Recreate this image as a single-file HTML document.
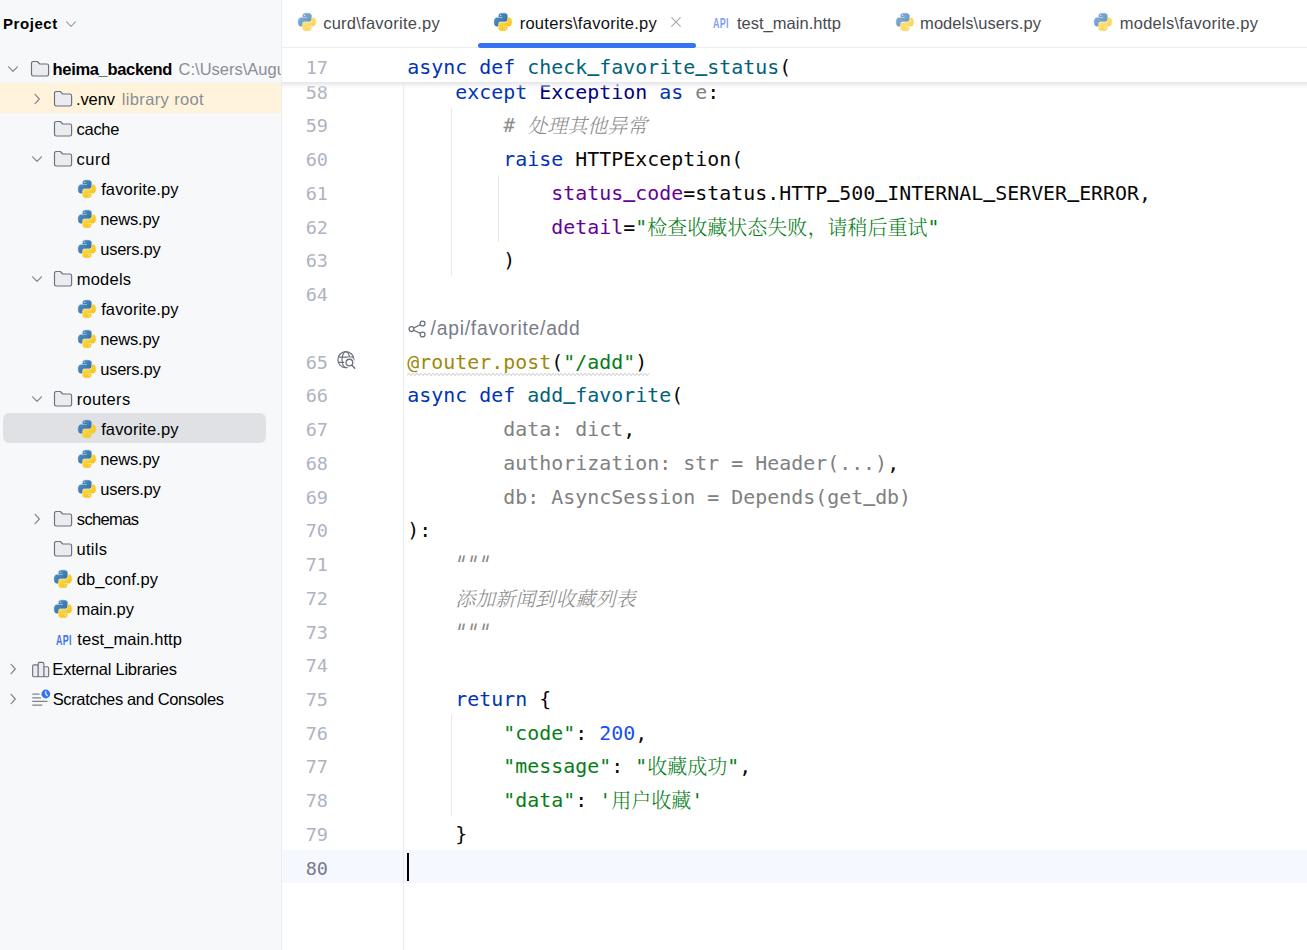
<!DOCTYPE html>
<html lang="zh-CN"><head><meta charset="utf-8"><title>heima_backend – routers\favorite.py</title>
<style>
html,body{margin:0;padding:0;background:#fff;}
body{width:1307px;height:950px;overflow:hidden;position:relative;font-family:"Liberation Sans","Noto Sans CJK SC",sans-serif;color:#000;}
#side{position:absolute;left:0;top:0;width:281px;height:950px;background:#f7f8fa;border-right:1px solid #ebecf0;overflow:hidden;}
#side .t{position:absolute;white-space:pre;font-size:16.5px;line-height:30px;height:30px;color:#000;}
#side .g{color:#8a8d96;font-weight:normal}
#side .b{font-weight:bold;}
.api{position:absolute;font-family:"Liberation Sans",sans-serif;font-weight:bold;font-size:15.300px;line-height:18px;height:18px;transform:scaleX(.585);transform-origin:0 50%;letter-spacing:.4px;}
#ed{position:absolute;left:282px;top:0;width:1025px;height:950px;background:#fff;overflow:hidden;}
.tab{position:absolute;top:0;height:47px;line-height:47px;font-size:16.5px;color:#404348;white-space:pre;}
.code{position:absolute;white-space:pre;font-family:"DejaVu Sans Mono","Liberation Mono","Noto Serif CJK SC",monospace;font-size:19.900px;letter-spacing:0.020px;color:#080808;}
.ln{position:absolute;white-space:pre;font-family:"DejaVu Sans Mono","Liberation Mono",monospace;font-size:18.500px;color:#aeb3c2;text-align:right;width:60px;}
.k{color:#0033b3}.f{color:#00627a}.s{color:#067d17}.n{color:#1750eb}.p{color:#660099}.c{color:#8c8c8c;font-style:italic}.u{color:#808080}.d{color:#9e880d}.x{color:#000080}
.cj{font-family:"Liberation Serif","Noto Serif CJK SC",serif;line-height:0;font-size:20px;font-weight:300;position:relative;top:0.700px;}
.inl{position:absolute;white-space:pre;font-size:19.300px;color:#787c88;height:33.740px;line-height:33.740px}
.tq{display:inline-block;transform:skewX(-13deg) scaleY(1.200);transform-origin:0 38%}
.us{position:relative;top:-3.400px;font-weight:bold}
.guide{position:absolute;width:1px;background:#e7e8ed;}
</style></head><body>
<svg width="0" height="0" style="position:absolute" aria-hidden="true">
<linearGradient id="pb" x1="0" y1="0" x2="1" y2="1"><stop offset="0" stop-color="#5497cf"/><stop offset="1" stop-color="#2c679c"/></linearGradient>
<linearGradient id="pyl" x1="0" y1="0" x2="1" y2="1"><stop offset="0" stop-color="#ffe355"/><stop offset="1" stop-color="#f2b90f"/></linearGradient>
</svg>

<div id="side">
<span id="proj" class="t b" style="left:2.91px;top:8.90px;letter-spacing:0.575px;font-size:15px">Project</span>
<svg style="position:absolute;left:63.00px;top:18.20px" viewBox="0 0 16 12" width="16" height="12"><path d="M3.600 3.800 L8 8.300 L12.400 3.800" fill="none" stroke="#9da0a8" stroke-width="1.200" stroke-linecap="round" stroke-linejoin="round"/></svg>
<div style="position:absolute;left:0;top:83.400px;width:281px;height:30px;background:#fff4db"></div>
<div style="position:absolute;left:3.200px;top:413.400px;width:262.600px;height:30px;background:#dfe1e5;border-radius:6px"></div>
<svg style="position:absolute;left:5.00px;top:63.00px" viewBox="0 0 16 12" width="16" height="12"><path d="M3.600 3.800 L8 8.300 L12.400 3.800" fill="none" stroke="#818594" stroke-width="1.200" stroke-linecap="round" stroke-linejoin="round"/></svg>
<svg style="position:absolute;left:30.2px;top:60.4px" viewBox="0 0 20 18" width="20" height="18"><path d="M1.500 3.200 a1.700 1.700 0 0 1 1.700-1.700 h4.100 l2.500 2.500 h7.100 a1.700 1.700 0 0 1 1.700 1.700 v8.600 a1.700 1.700 0 0 1-1.700 1.700 h-13.700 a1.700 1.700 0 0 1-1.700-1.700 z" fill="#ebecf0" stroke="#6c707e" stroke-width="1.150" stroke-linejoin="round"/></svg>
<span id="s0" class="t b" style="left:52.58px;top:54.10px;letter-spacing:-0.331px;">heima_backend</span>
<span id="e0" class="t g" style="left:178.60px;top:54.10px;letter-spacing:0.000px;">C:\Users\August</span>
<svg style="position:absolute;left:30.80px;top:91.00px" viewBox="0 0 12 16" width="12" height="16"><path d="M4.100 3.300 L8.300 8 L4.100 12.700" fill="none" stroke="#818594" stroke-width="1.200" stroke-linecap="round" stroke-linejoin="round"/></svg>
<svg style="position:absolute;left:53.2px;top:90.4px" viewBox="0 0 20 18" width="20" height="18"><path d="M1.500 3.200 a1.700 1.700 0 0 1 1.700-1.700 h4.100 l2.500 2.500 h7.100 a1.700 1.700 0 0 1 1.700 1.700 v8.600 a1.700 1.700 0 0 1-1.700 1.700 h-13.700 a1.700 1.700 0 0 1-1.700-1.700 z" fill="#ebecf0" stroke="#6c707e" stroke-width="1.150" stroke-linejoin="round"/></svg>
<span id="s1" class="t" style="left:75.88px;top:84.10px;letter-spacing:-0.074px;">.venv</span>
<span id="e1" class="t g" style="left:121.71px;top:84.10px;letter-spacing:0.366px;">library root</span>
<svg style="position:absolute;left:53.2px;top:120.4px" viewBox="0 0 20 18" width="20" height="18"><path d="M1.500 3.200 a1.700 1.700 0 0 1 1.700-1.700 h4.100 l2.500 2.500 h7.100 a1.700 1.700 0 0 1 1.700 1.700 v8.600 a1.700 1.700 0 0 1-1.700 1.700 h-13.700 a1.700 1.700 0 0 1-1.700-1.700 z" fill="#ebecf0" stroke="#6c707e" stroke-width="1.150" stroke-linejoin="round"/></svg>
<span id="s2" class="t" style="left:76.60px;top:114.10px;letter-spacing:-0.321px;">cache</span>
<svg style="position:absolute;left:29.00px;top:153.00px" viewBox="0 0 16 12" width="16" height="12"><path d="M3.600 3.800 L8 8.300 L12.400 3.800" fill="none" stroke="#818594" stroke-width="1.200" stroke-linecap="round" stroke-linejoin="round"/></svg>
<svg style="position:absolute;left:53.2px;top:150.4px" viewBox="0 0 20 18" width="20" height="18"><path d="M1.500 3.200 a1.700 1.700 0 0 1 1.700-1.700 h4.100 l2.500 2.500 h7.100 a1.700 1.700 0 0 1 1.700 1.700 v8.600 a1.700 1.700 0 0 1-1.700 1.700 h-13.700 a1.700 1.700 0 0 1-1.700-1.700 z" fill="#ebecf0" stroke="#6c707e" stroke-width="1.150" stroke-linejoin="round"/></svg>
<span id="s3" class="t" style="left:76.60px;top:144.10px;letter-spacing:0.461px;">curd</span>
<svg style="position:absolute;left:78px;top:180.1px;opacity:1" viewBox="0 0 18 18" width="18" height="18" overflow="visible"><g transform="translate(9 9) scale(1.05) translate(-9 -9)"><path d="M8.9 0.6c-4.2 0-3.9 1.8-3.9 1.8v1.9h4v.6H3.4S.6 4.6.6 8.9c0 4.300 2.400 4.100 2.400 4.100h1.500v-2s-.1-2.400 2.400-2.400h4s2.300 0 2.300-2.200V2.800S13.600.6 8.900.6zM6.700 1.900a.73.73 0 1 1 0 1.460.73.73 0 0 1 0-1.460z" fill="url(#pb)" stroke="#3f7fb5" stroke-width="0.350"/><path d="M9.100 17.400c4.200 0 3.900-1.800 3.900-1.800v-1.900H9v-.6h5.600s2.800.3 2.800-4c0-4.300-2.400-4.100-2.400-4.100h-1.500v2s.1 2.400-2.400 2.400h-4s-2.300 0-2.300 2.200v3.600s-.4 2.200 4.300 2.200zm2.200-1.300a.73.73 0 1 1 0-1.460.73.73 0 0 1 0 1.460z" fill="url(#pyl)" stroke="#f9cc32" stroke-width="0.350"/></g></svg>
<span id="s4" class="t" style="left:101.16px;top:174.10px;letter-spacing:0.134px;">favorite.py</span>
<svg style="position:absolute;left:78px;top:210.1px;opacity:1" viewBox="0 0 18 18" width="18" height="18" overflow="visible"><g transform="translate(9 9) scale(1.05) translate(-9 -9)"><path d="M8.9 0.6c-4.2 0-3.9 1.8-3.9 1.8v1.9h4v.6H3.4S.6 4.6.6 8.9c0 4.300 2.400 4.100 2.400 4.100h1.500v-2s-.1-2.400 2.400-2.400h4s2.300 0 2.300-2.200V2.800S13.600.6 8.900.6zM6.700 1.900a.73.73 0 1 1 0 1.460.73.73 0 0 1 0-1.460z" fill="url(#pb)" stroke="#3f7fb5" stroke-width="0.350"/><path d="M9.100 17.400c4.200 0 3.900-1.800 3.900-1.800v-1.900H9v-.6h5.600s2.800.3 2.800-4c0-4.300-2.400-4.100-2.400-4.100h-1.500v2s.1 2.400-2.400 2.400h-4s-2.300 0-2.300 2.200v3.600s-.4 2.200 4.300 2.200zm2.200-1.300a.73.73 0 1 1 0-1.460.73.73 0 0 1 0 1.460z" fill="url(#pyl)" stroke="#f9cc32" stroke-width="0.350"/></g></svg>
<span id="s5" class="t" style="left:100.19px;top:204.10px;letter-spacing:-0.176px;">news.py</span>
<svg style="position:absolute;left:78px;top:240.1px;opacity:1" viewBox="0 0 18 18" width="18" height="18" overflow="visible"><g transform="translate(9 9) scale(1.05) translate(-9 -9)"><path d="M8.9 0.6c-4.2 0-3.9 1.8-3.9 1.8v1.9h4v.6H3.4S.6 4.6.6 8.9c0 4.300 2.400 4.100 2.400 4.100h1.500v-2s-.1-2.400 2.400-2.400h4s2.300 0 2.300-2.200V2.800S13.600.6 8.900.6zM6.700 1.900a.73.73 0 1 1 0 1.460.73.73 0 0 1 0-1.460z" fill="url(#pb)" stroke="#3f7fb5" stroke-width="0.350"/><path d="M9.100 17.400c4.200 0 3.900-1.800 3.900-1.800v-1.900H9v-.6h5.600s2.800.3 2.800-4c0-4.300-2.400-4.100-2.400-4.100h-1.500v2s.1 2.400-2.400 2.400h-4s-2.300 0-2.300 2.200v3.600s-.4 2.200 4.300 2.200zm2.200-1.300a.73.73 0 1 1 0-1.460.73.73 0 0 1 0 1.460z" fill="url(#pyl)" stroke="#f9cc32" stroke-width="0.350"/></g></svg>
<span id="s6" class="t" style="left:100.30px;top:234.10px;letter-spacing:-0.278px;">users.py</span>
<svg style="position:absolute;left:29.00px;top:273.00px" viewBox="0 0 16 12" width="16" height="12"><path d="M3.600 3.800 L8 8.300 L12.400 3.800" fill="none" stroke="#818594" stroke-width="1.200" stroke-linecap="round" stroke-linejoin="round"/></svg>
<svg style="position:absolute;left:53.2px;top:270.4px" viewBox="0 0 20 18" width="20" height="18"><path d="M1.500 3.200 a1.700 1.700 0 0 1 1.700-1.700 h4.100 l2.500 2.500 h7.100 a1.700 1.700 0 0 1 1.700 1.700 v8.600 a1.700 1.700 0 0 1-1.700 1.700 h-13.700 a1.700 1.700 0 0 1-1.700-1.700 z" fill="#ebecf0" stroke="#6c707e" stroke-width="1.150" stroke-linejoin="round"/></svg>
<span id="s7" class="t" style="left:76.68px;top:264.10px;letter-spacing:0.243px;">models</span>
<svg style="position:absolute;left:78px;top:300.09999999999997px;opacity:1" viewBox="0 0 18 18" width="18" height="18" overflow="visible"><g transform="translate(9 9) scale(1.05) translate(-9 -9)"><path d="M8.9 0.6c-4.2 0-3.9 1.8-3.9 1.8v1.9h4v.6H3.4S.6 4.6.6 8.9c0 4.300 2.400 4.100 2.400 4.100h1.500v-2s-.1-2.400 2.400-2.400h4s2.300 0 2.300-2.200V2.800S13.600.6 8.900.6zM6.700 1.900a.73.73 0 1 1 0 1.460.73.73 0 0 1 0-1.460z" fill="url(#pb)" stroke="#3f7fb5" stroke-width="0.350"/><path d="M9.100 17.400c4.200 0 3.900-1.800 3.900-1.800v-1.900H9v-.6h5.600s2.800.3 2.800-4c0-4.300-2.400-4.100-2.400-4.100h-1.500v2s.1 2.400-2.400 2.400h-4s-2.300 0-2.300 2.200v3.600s-.4 2.200 4.300 2.200zm2.200-1.300a.73.73 0 1 1 0-1.460.73.73 0 0 1 0 1.460z" fill="url(#pyl)" stroke="#f9cc32" stroke-width="0.350"/></g></svg>
<span id="s8" class="t" style="left:101.16px;top:294.10px;letter-spacing:0.134px;">favorite.py</span>
<svg style="position:absolute;left:78px;top:330.09999999999997px;opacity:1" viewBox="0 0 18 18" width="18" height="18" overflow="visible"><g transform="translate(9 9) scale(1.05) translate(-9 -9)"><path d="M8.9 0.6c-4.2 0-3.9 1.8-3.9 1.8v1.9h4v.6H3.4S.6 4.6.6 8.9c0 4.300 2.400 4.100 2.400 4.100h1.500v-2s-.1-2.400 2.400-2.400h4s2.300 0 2.300-2.200V2.800S13.600.6 8.900.6zM6.700 1.900a.73.73 0 1 1 0 1.460.73.73 0 0 1 0-1.460z" fill="url(#pb)" stroke="#3f7fb5" stroke-width="0.350"/><path d="M9.100 17.400c4.200 0 3.900-1.800 3.900-1.800v-1.900H9v-.6h5.600s2.800.3 2.800-4c0-4.300-2.400-4.100-2.400-4.100h-1.500v2s.1 2.400-2.400 2.400h-4s-2.300 0-2.300 2.200v3.600s-.4 2.200 4.300 2.200zm2.200-1.300a.73.73 0 1 1 0-1.460.73.73 0 0 1 0 1.460z" fill="url(#pyl)" stroke="#f9cc32" stroke-width="0.350"/></g></svg>
<span id="s9" class="t" style="left:100.19px;top:324.10px;letter-spacing:-0.176px;">news.py</span>
<svg style="position:absolute;left:78px;top:360.09999999999997px;opacity:1" viewBox="0 0 18 18" width="18" height="18" overflow="visible"><g transform="translate(9 9) scale(1.05) translate(-9 -9)"><path d="M8.9 0.6c-4.2 0-3.9 1.8-3.9 1.8v1.9h4v.6H3.4S.6 4.6.6 8.9c0 4.300 2.400 4.100 2.400 4.100h1.500v-2s-.1-2.400 2.400-2.400h4s2.300 0 2.300-2.200V2.800S13.600.6 8.900.6zM6.700 1.900a.73.73 0 1 1 0 1.460.73.73 0 0 1 0-1.460z" fill="url(#pb)" stroke="#3f7fb5" stroke-width="0.350"/><path d="M9.100 17.400c4.200 0 3.900-1.800 3.900-1.800v-1.900H9v-.6h5.600s2.800.3 2.800-4c0-4.300-2.400-4.100-2.400-4.100h-1.500v2s.1 2.400-2.400 2.400h-4s-2.300 0-2.300 2.200v3.600s-.4 2.200 4.300 2.200zm2.200-1.300a.73.73 0 1 1 0-1.460.73.73 0 0 1 0 1.460z" fill="url(#pyl)" stroke="#f9cc32" stroke-width="0.350"/></g></svg>
<span id="s10" class="t" style="left:100.30px;top:354.10px;letter-spacing:-0.278px;">users.py</span>
<svg style="position:absolute;left:29.00px;top:393.00px" viewBox="0 0 16 12" width="16" height="12"><path d="M3.600 3.800 L8 8.300 L12.400 3.800" fill="none" stroke="#818594" stroke-width="1.200" stroke-linecap="round" stroke-linejoin="round"/></svg>
<svg style="position:absolute;left:53.2px;top:390.4px" viewBox="0 0 20 18" width="20" height="18"><path d="M1.500 3.200 a1.700 1.700 0 0 1 1.700-1.700 h4.100 l2.500 2.500 h7.100 a1.700 1.700 0 0 1 1.700 1.700 v8.600 a1.700 1.700 0 0 1-1.700 1.700 h-13.700 a1.700 1.700 0 0 1-1.700-1.700 z" fill="#ebecf0" stroke="#6c707e" stroke-width="1.150" stroke-linejoin="round"/></svg>
<span id="s11" class="t" style="left:76.68px;top:384.10px;letter-spacing:0.353px;">routers</span>
<svg style="position:absolute;left:78px;top:420.09999999999997px;opacity:1" viewBox="0 0 18 18" width="18" height="18" overflow="visible"><g transform="translate(9 9) scale(1.05) translate(-9 -9)"><path d="M8.9 0.6c-4.2 0-3.9 1.8-3.9 1.8v1.9h4v.6H3.4S.6 4.6.6 8.9c0 4.300 2.400 4.100 2.400 4.100h1.500v-2s-.1-2.400 2.400-2.400h4s2.300 0 2.300-2.200V2.800S13.600.6 8.900.6zM6.700 1.900a.73.73 0 1 1 0 1.460.73.73 0 0 1 0-1.460z" fill="url(#pb)" stroke="#3f7fb5" stroke-width="0.350"/><path d="M9.100 17.400c4.200 0 3.900-1.800 3.900-1.800v-1.900H9v-.6h5.600s2.800.3 2.800-4c0-4.300-2.400-4.100-2.400-4.100h-1.500v2s.1 2.400-2.400 2.400h-4s-2.300 0-2.300 2.200v3.600s-.4 2.200 4.300 2.200zm2.200-1.300a.73.73 0 1 1 0-1.460.73.73 0 0 1 0 1.460z" fill="url(#pyl)" stroke="#f9cc32" stroke-width="0.350"/></g></svg>
<span id="s12" class="t" style="left:101.16px;top:414.10px;letter-spacing:0.134px;">favorite.py</span>
<svg style="position:absolute;left:78px;top:450.09999999999997px;opacity:1" viewBox="0 0 18 18" width="18" height="18" overflow="visible"><g transform="translate(9 9) scale(1.05) translate(-9 -9)"><path d="M8.9 0.6c-4.2 0-3.9 1.8-3.9 1.8v1.9h4v.6H3.4S.6 4.6.6 8.9c0 4.300 2.400 4.100 2.400 4.100h1.500v-2s-.1-2.400 2.400-2.400h4s2.300 0 2.300-2.200V2.800S13.600.6 8.900.6zM6.700 1.900a.73.73 0 1 1 0 1.460.73.73 0 0 1 0-1.460z" fill="url(#pb)" stroke="#3f7fb5" stroke-width="0.350"/><path d="M9.100 17.400c4.200 0 3.900-1.800 3.900-1.800v-1.900H9v-.6h5.600s2.800.3 2.800-4c0-4.300-2.400-4.100-2.400-4.100h-1.500v2s.1 2.400-2.400 2.400h-4s-2.300 0-2.300 2.200v3.600s-.4 2.200 4.300 2.200zm2.200-1.300a.73.73 0 1 1 0-1.460.73.73 0 0 1 0 1.460z" fill="url(#pyl)" stroke="#f9cc32" stroke-width="0.350"/></g></svg>
<span id="s13" class="t" style="left:100.19px;top:444.10px;letter-spacing:-0.176px;">news.py</span>
<svg style="position:absolute;left:78px;top:480.09999999999997px;opacity:1" viewBox="0 0 18 18" width="18" height="18" overflow="visible"><g transform="translate(9 9) scale(1.05) translate(-9 -9)"><path d="M8.9 0.6c-4.2 0-3.9 1.8-3.9 1.8v1.9h4v.6H3.4S.6 4.6.6 8.9c0 4.300 2.400 4.100 2.400 4.100h1.500v-2s-.1-2.400 2.400-2.400h4s2.300 0 2.300-2.200V2.800S13.600.6 8.900.6zM6.700 1.900a.73.73 0 1 1 0 1.460.73.73 0 0 1 0-1.460z" fill="url(#pb)" stroke="#3f7fb5" stroke-width="0.350"/><path d="M9.100 17.400c4.200 0 3.900-1.800 3.900-1.800v-1.900H9v-.6h5.600s2.800.3 2.800-4c0-4.300-2.400-4.100-2.400-4.100h-1.500v2s.1 2.400-2.400 2.400h-4s-2.300 0-2.300 2.200v3.600s-.4 2.200 4.300 2.200zm2.200-1.300a.73.73 0 1 1 0-1.460.73.73 0 0 1 0 1.460z" fill="url(#pyl)" stroke="#f9cc32" stroke-width="0.350"/></g></svg>
<span id="s14" class="t" style="left:100.30px;top:474.10px;letter-spacing:-0.278px;">users.py</span>
<svg style="position:absolute;left:30.80px;top:511.00px" viewBox="0 0 12 16" width="12" height="16"><path d="M4.100 3.300 L8.300 8 L4.100 12.700" fill="none" stroke="#818594" stroke-width="1.200" stroke-linecap="round" stroke-linejoin="round"/></svg>
<svg style="position:absolute;left:53.2px;top:510.4px" viewBox="0 0 20 18" width="20" height="18"><path d="M1.500 3.200 a1.700 1.700 0 0 1 1.700-1.700 h4.100 l2.500 2.500 h7.100 a1.700 1.700 0 0 1 1.700 1.700 v8.600 a1.700 1.700 0 0 1-1.700 1.700 h-13.700 a1.700 1.700 0 0 1-1.700-1.700 z" fill="#ebecf0" stroke="#6c707e" stroke-width="1.150" stroke-linejoin="round"/></svg>
<span id="s15" class="t" style="left:76.79px;top:504.10px;letter-spacing:-0.645px;">schemas</span>
<svg style="position:absolute;left:53.2px;top:540.4px" viewBox="0 0 20 18" width="20" height="18"><path d="M1.500 3.200 a1.700 1.700 0 0 1 1.700-1.700 h4.100 l2.500 2.500 h7.100 a1.700 1.700 0 0 1 1.700 1.700 v8.600 a1.700 1.700 0 0 1-1.700 1.700 h-13.700 a1.700 1.700 0 0 1-1.700-1.700 z" fill="#ebecf0" stroke="#6c707e" stroke-width="1.150" stroke-linejoin="round"/></svg>
<span id="s16" class="t" style="left:76.53px;top:534.10px;letter-spacing:0.294px;">utils</span>
<svg style="position:absolute;left:54px;top:570.1px;opacity:1" viewBox="0 0 18 18" width="18" height="18" overflow="visible"><g transform="translate(9 9) scale(1.05) translate(-9 -9)"><path d="M8.9 0.6c-4.2 0-3.9 1.8-3.9 1.8v1.9h4v.6H3.4S.6 4.6.6 8.9c0 4.300 2.400 4.100 2.400 4.100h1.500v-2s-.1-2.400 2.400-2.400h4s2.300 0 2.300-2.200V2.800S13.600.6 8.900.6zM6.700 1.900a.73.73 0 1 1 0 1.460.73.73 0 0 1 0-1.460z" fill="url(#pb)" stroke="#3f7fb5" stroke-width="0.350"/><path d="M9.100 17.400c4.200 0 3.900-1.800 3.900-1.800v-1.900H9v-.6h5.600s2.800.3 2.800-4c0-4.300-2.400-4.100-2.400-4.100h-1.500v2s.1 2.400-2.400 2.400h-4s-2.300 0-2.300 2.200v3.600s-.4 2.200 4.300 2.200zm2.200-1.300a.73.73 0 1 1 0-1.460.73.73 0 0 1 0 1.460z" fill="url(#pyl)" stroke="#f9cc32" stroke-width="0.350"/></g></svg>
<span id="s17" class="t" style="left:76.82px;top:564.10px;letter-spacing:0.044px;">db_conf.py</span>
<svg style="position:absolute;left:54px;top:600.1px;opacity:1" viewBox="0 0 18 18" width="18" height="18" overflow="visible"><g transform="translate(9 9) scale(1.05) translate(-9 -9)"><path d="M8.9 0.6c-4.2 0-3.9 1.8-3.9 1.8v1.9h4v.6H3.4S.6 4.6.6 8.9c0 4.300 2.400 4.100 2.400 4.100h1.500v-2s-.1-2.400 2.400-2.400h4s2.300 0 2.300-2.200V2.800S13.600.6 8.900.6zM6.700 1.900a.73.73 0 1 1 0 1.460.73.73 0 0 1 0-1.460z" fill="url(#pb)" stroke="#3f7fb5" stroke-width="0.350"/><path d="M9.100 17.400c4.200 0 3.900-1.800 3.900-1.800v-1.900H9v-.6h5.600s2.800.3 2.800-4c0-4.300-2.400-4.100-2.400-4.100h-1.500v2s.1 2.400-2.400 2.400h-4s-2.300 0-2.300 2.200v3.600s-.4 2.200 4.300 2.200zm2.200-1.300a.73.73 0 1 1 0-1.460.73.73 0 0 1 0 1.460z" fill="url(#pyl)" stroke="#f9cc32" stroke-width="0.350"/></g></svg>
<span id="s18" class="t" style="left:76.45px;top:594.10px;letter-spacing:-0.049px;">main.py</span>
<span class="api" style="left:55.90px;top:631.20px;color:#4279f0">API</span>
<span id="s19" class="t" style="left:77.35px;top:624.10px;letter-spacing:0.073px;">test_main.http</span>
<svg style="position:absolute;left:6.80px;top:661.00px" viewBox="0 0 12 16" width="12" height="16"><path d="M4.100 3.300 L8.300 8 L4.100 12.700" fill="none" stroke="#818594" stroke-width="1.200" stroke-linecap="round" stroke-linejoin="round"/></svg>
<svg style="position:absolute;left:30.100px;top:653.80px" viewBox="0 0 22 30" width="22" height="30"><g fill="#ebecf0" stroke="#6c707e" stroke-width="1.100" stroke-linejoin="round"><rect x="2.650" y="10.900" width="5.700" height="11.800" rx="1.300"/><rect x="13.650" y="12.800" width="5.000" height="9.900" rx="1.300"/><rect x="8.150" y="8.350" width="5.700" height="14.350" rx="1.300"/></g></svg>
<span id="s20" class="t" style="left:52.36px;top:654.10px;letter-spacing:-0.225px;">External Libraries</span>
<svg style="position:absolute;left:6.80px;top:691.00px" viewBox="0 0 12 16" width="12" height="16"><path d="M4.100 3.300 L8.300 8 L4.100 12.700" fill="none" stroke="#818594" stroke-width="1.200" stroke-linecap="round" stroke-linejoin="round"/></svg>
<svg style="position:absolute;left:30px;top:683.90px" viewBox="0 0 22 30" width="22" height="30"><g stroke="#7e828e" stroke-width="1.250" stroke-linecap="butt"><path d="M2.300 10H9.500M2.300 13.800H11M2.300 17.400H17.500M2.300 21.100H12.300"/></g><circle cx="15.800" cy="10" r="4.400" fill="#3574f0"/><path d="M15.800 7.600V10.200L17.300 11.600" fill="none" stroke="#fff" stroke-width="1.100" stroke-linecap="round" stroke-linejoin="round"/></svg>
<span id="s21" class="t" style="left:52.69px;top:684.10px;letter-spacing:-0.360px;">Scratches and Consoles</span>
</div>
<div id="ed">
<svg style="position:absolute;left:16px;top:13px;opacity:0.72" viewBox="0 0 18 18" width="18" height="18" overflow="visible"><g transform="translate(9 9) scale(1.05) translate(-9 -9)"><path d="M8.9 0.6c-4.2 0-3.9 1.8-3.9 1.8v1.9h4v.6H3.4S.6 4.6.6 8.9c0 4.300 2.400 4.100 2.400 4.100h1.500v-2s-.1-2.400 2.400-2.400h4s2.300 0 2.300-2.200V2.800S13.600.6 8.900.6zM6.700 1.900a.73.73 0 1 1 0 1.460.73.73 0 0 1 0-1.460z" fill="url(#pb)" stroke="#3f7fb5" stroke-width="0.350"/><path d="M9.100 17.400c4.200 0 3.900-1.800 3.900-1.800v-1.900H9v-.6h5.600s2.800.3 2.800-4c0-4.300-2.400-4.100-2.400-4.100h-1.500v2s.1 2.400-2.400 2.400h-4s-2.300 0-2.300 2.200v3.600s-.4 2.200 4.300 2.200zm2.200-1.300a.73.73 0 1 1 0-1.460.73.73 0 0 1 0 1.460z" fill="url(#pyl)" stroke="#f9cc32" stroke-width="0.350"/></g></svg>
<span id="tab0" class="tab" style="left:41.13px;top:0.00px;letter-spacing:0.252px;color:#484a50">curd\favorite.py</span>
<svg style="position:absolute;left:212px;top:13px;opacity:1" viewBox="0 0 18 18" width="18" height="18" overflow="visible"><g transform="translate(9 9) scale(1.05) translate(-9 -9)"><path d="M8.9 0.6c-4.2 0-3.9 1.8-3.9 1.8v1.9h4v.6H3.4S.6 4.6.6 8.9c0 4.300 2.400 4.100 2.400 4.100h1.500v-2s-.1-2.400 2.400-2.400h4s2.300 0 2.300-2.200V2.800S13.600.6 8.900.6zM6.700 1.900a.73.73 0 1 1 0 1.460.73.73 0 0 1 0-1.460z" fill="url(#pb)" stroke="#3f7fb5" stroke-width="0.350"/><path d="M9.100 17.400c4.200 0 3.900-1.800 3.900-1.800v-1.900H9v-.6h5.600s2.800.3 2.800-4c0-4.300-2.400-4.100-2.400-4.100h-1.500v2s.1 2.400-2.400 2.400h-4s-2.300 0-2.300 2.200v3.600s-.4 2.200 4.300 2.200zm2.200-1.300a.73.73 0 1 1 0-1.460.73.73 0 0 1 0 1.460z" fill="url(#pyl)" stroke="#f9cc32" stroke-width="0.350"/></g></svg>
<span id="tab1" class="tab" style="left:237.64px;top:0.00px;letter-spacing:0.286px;color:#111">routers\favorite.py</span>
<span class="api" style="left:430.80px;top:14.20px;color:#7fa3f5">API</span>
<span id="tab2" class="tab" style="left:454.91px;top:0.00px;letter-spacing:0.024px;color:#484a50">test_main.http</span>
<svg style="position:absolute;left:614px;top:13px;opacity:0.72" viewBox="0 0 18 18" width="18" height="18" overflow="visible"><g transform="translate(9 9) scale(1.05) translate(-9 -9)"><path d="M8.9 0.6c-4.2 0-3.9 1.8-3.9 1.8v1.9h4v.6H3.4S.6 4.6.6 8.9c0 4.300 2.400 4.100 2.400 4.100h1.500v-2s-.1-2.400 2.400-2.400h4s2.300 0 2.300-2.200V2.800S13.600.6 8.900.6zM6.700 1.900a.73.73 0 1 1 0 1.460.73.73 0 0 1 0-1.460z" fill="url(#pb)" stroke="#3f7fb5" stroke-width="0.350"/><path d="M9.100 17.400c4.200 0 3.900-1.800 3.900-1.800v-1.900H9v-.6h5.600s2.800.3 2.800-4c0-4.300-2.400-4.100-2.400-4.100h-1.500v2s.1 2.400-2.400 2.400h-4s-2.300 0-2.300 2.200v3.600s-.4 2.200 4.300 2.200zm2.200-1.300a.73.73 0 1 1 0-1.460.73.73 0 0 1 0 1.460z" fill="url(#pyl)" stroke="#f9cc32" stroke-width="0.350"/></g></svg>
<span id="tab3" class="tab" style="left:638.08px;top:0.00px;letter-spacing:0.056px;color:#484a50">models\users.py</span>
<svg style="position:absolute;left:812px;top:13px;opacity:0.72" viewBox="0 0 18 18" width="18" height="18" overflow="visible"><g transform="translate(9 9) scale(1.05) translate(-9 -9)"><path d="M8.9 0.6c-4.2 0-3.9 1.8-3.9 1.8v1.9h4v.6H3.4S.6 4.6.6 8.9c0 4.300 2.400 4.100 2.400 4.100h1.500v-2s-.1-2.400 2.400-2.400h4s2.300 0 2.300-2.200V2.800S13.600.6 8.900.6zM6.700 1.900a.73.73 0 1 1 0 1.460.73.73 0 0 1 0-1.460z" fill="url(#pb)" stroke="#3f7fb5" stroke-width="0.350"/><path d="M9.100 17.400c4.200 0 3.900-1.800 3.900-1.800v-1.900H9v-.6h5.600s2.800.3 2.800-4c0-4.300-2.400-4.100-2.400-4.100h-1.500v2s.1 2.400-2.400 2.400h-4s-2.300 0-2.300 2.200v3.600s-.4 2.200 4.300 2.200zm2.200-1.300a.73.73 0 1 1 0-1.460.73.73 0 0 1 0 1.460z" fill="url(#pyl)" stroke="#f9cc32" stroke-width="0.350"/></g></svg>
<span id="tab4" class="tab" style="left:837.72px;top:0.00px;letter-spacing:0.254px;color:#484a50">models\favorite.py</span>
<svg style="position:absolute;left:388.29999999999995px;top:16.300px" viewBox="0 0 12 12" width="12" height="12"><path d="M1.700 1.700L10.300 10.300M10.300 1.700L1.700 10.300" stroke="#a3a6b0" stroke-width="1.100" stroke-linecap="round"/></svg>
<div style="position:absolute;left:0;top:47px;width:1025px;height:1px;background:#ebecf0"></div>
<div style="position:absolute;left:196px;top:43px;width:218px;height:5px;background:#3574f0;border-radius:3px"></div>
<div style="position:absolute;left:121px;top:82px;width:1px;height:868px;background:#ebecf0"></div>
<div style="position:absolute;left:0;top:850.3px;width:1025px;height:33px;background:#f5f8fe"></div>
<div style="position:absolute;left:121px;top:850.3px;width:1px;height:33px;background:#e6e9f0"></div>
<div class="ln" style="left:-14px;top:76px;height:33.74px;line-height:33.74px">58</div>
<div class="code" style="left:125.30000000000001px;top:76px;height:33.74px;line-height:33.74px">    <span class="k">except</span> <span class="x">Exception</span> <span class="k">as</span> <span class="u">e</span>:</div>
<div class="ln" style="left:-14px;top:109px;height:33.74px;line-height:33.74px">59</div>
<div class="code" style="left:125.30000000000001px;top:109px;height:33.74px;line-height:33.74px">        <span class="c"># <span class="cj">处理其他异常</span></span></div>
<div class="ln" style="left:-14px;top:143px;height:33.74px;line-height:33.74px">60</div>
<div class="code" style="left:125.30000000000001px;top:143px;height:33.74px;line-height:33.74px">        <span class="k">raise</span> HTTPException(</div>
<div class="ln" style="left:-14px;top:177px;height:33.74px;line-height:33.74px">61</div>
<div class="code" style="left:125.30000000000001px;top:177px;height:33.74px;line-height:33.74px">            <span class="p">status<span class="us">_</span>code</span>=status.HTTP<span class="us">_</span>500<span class="us">_</span>INTERNAL<span class="us">_</span>SERVER<span class="us">_</span>ERROR,</div>
<div class="ln" style="left:-14px;top:211px;height:33.74px;line-height:33.74px">62</div>
<div class="code" style="left:125.30000000000001px;top:211px;height:33.74px;line-height:33.74px">            <span class="p">detail</span>=<span class="s">&quot;<span class="cj">检查收藏状态失败，请稍后重试</span>&quot;</span></div>
<div class="ln" style="left:-14px;top:244px;height:33.74px;line-height:33.74px">63</div>
<div class="code" style="left:125.30000000000001px;top:244px;height:33.74px;line-height:33.74px">        )</div>
<div class="ln" style="left:-14px;top:278px;height:33.74px;line-height:33.74px">64</div>
<svg style="position:absolute;left:124px;top:318.00px" viewBox="0 0 22 22" width="22" height="22"><g fill="none" stroke="#6c707e" stroke-width="1.250"><circle cx="5.500" cy="11.100" r="2.450"/><circle cx="16.600" cy="5.500" r="2.450"/><circle cx="16.600" cy="16.500" r="2.450"/><path d="M7.700 10L14.400 6.600M7.700 12.200L14.400 15.400"/></g></svg>
<span id="inlay" class="inl" style="left:148.61px;top:312.36px;letter-spacing:0.750px;">/api/favorite/add</span>
<div class="ln" style="left:-14px;top:346px;height:33.74px;line-height:33.74px">65</div>
<div class="code" style="left:125.30000000000001px;top:346px;height:33.74px;line-height:33.74px"><span class="d">@router.post</span>(<span class="s">&quot;/add&quot;</span>)</div>
<div class="ln" style="left:-14px;top:379px;height:33.74px;line-height:33.74px">66</div>
<div class="code" style="left:125.30000000000001px;top:379px;height:33.74px;line-height:33.74px"><span class="k">async</span> <span class="k">def</span> <span class="f">add<span class="us">_</span>favorite</span>(</div>
<div class="ln" style="left:-14px;top:413px;height:33.74px;line-height:33.74px">67</div>
<div class="code" style="left:125.30000000000001px;top:413px;height:33.74px;line-height:33.74px">        <span class="u">data: dict</span>,</div>
<div class="ln" style="left:-14px;top:447px;height:33.74px;line-height:33.74px">68</div>
<div class="code" style="left:125.30000000000001px;top:447px;height:33.74px;line-height:33.74px">        <span class="u">authorization: str = Header(...)</span>,</div>
<div class="ln" style="left:-14px;top:481px;height:33.74px;line-height:33.74px">69</div>
<div class="code" style="left:125.30000000000001px;top:481px;height:33.74px;line-height:33.74px">        <span class="u">db: AsyncSession = Depends(get<span class="us">_</span>db)</span></div>
<div class="ln" style="left:-14px;top:514px;height:33.74px;line-height:33.74px">70</div>
<div class="code" style="left:125.30000000000001px;top:514px;height:33.74px;line-height:33.74px">):</div>
<div class="ln" style="left:-14px;top:548px;height:33.74px;line-height:33.74px">71</div>
<div class="code" style="left:125.30000000000001px;top:548px;height:33.74px;line-height:33.74px">    <span class="c tq">&quot;&quot;&quot;</span></div>
<div class="ln" style="left:-14px;top:582px;height:33.74px;line-height:33.74px">72</div>
<div class="code" style="left:125.30000000000001px;top:582px;height:33.74px;line-height:33.74px">    <span class="c"><span class="cj">添加新闻到收藏列表</span></span></div>
<div class="ln" style="left:-14px;top:616px;height:33.74px;line-height:33.74px">73</div>
<div class="code" style="left:125.30000000000001px;top:616px;height:33.74px;line-height:33.74px">    <span class="c tq">&quot;&quot;&quot;</span></div>
<div class="ln" style="left:-14px;top:649px;height:33.74px;line-height:33.74px">74</div>
<div class="ln" style="left:-14px;top:683px;height:33.74px;line-height:33.74px">75</div>
<div class="code" style="left:125.30000000000001px;top:683px;height:33.74px;line-height:33.74px">    <span class="k">return</span> {</div>
<div class="ln" style="left:-14px;top:717px;height:33.74px;line-height:33.74px">76</div>
<div class="code" style="left:125.30000000000001px;top:717px;height:33.74px;line-height:33.74px">        <span class="s">&quot;code&quot;</span>: <span class="n">200</span>,</div>
<div class="ln" style="left:-14px;top:750px;height:33.74px;line-height:33.74px">77</div>
<div class="code" style="left:125.30000000000001px;top:750px;height:33.74px;line-height:33.74px">        <span class="s">&quot;message&quot;</span>: <span class="s">&quot;<span class="cj">收藏成功</span>&quot;</span>,</div>
<div class="ln" style="left:-14px;top:784px;height:33.74px;line-height:33.74px">78</div>
<div class="code" style="left:125.30000000000001px;top:784px;height:33.74px;line-height:33.74px">        <span class="s">&quot;data&quot;</span>: <span class="s">'<span class="cj">用户收藏</span>'</span></div>
<div class="ln" style="left:-14px;top:818px;height:33.74px;line-height:33.74px">79</div>
<div class="code" style="left:125.30000000000001px;top:818px;height:33.74px;line-height:33.74px">    }</div>
<div class="ln" style="left:-14px;top:852px;height:33.74px;line-height:33.74px;color:#767a8a">80</div>
<div class="guide" style="left:169px;top:107.62px;height:168.20px"></div>
<div class="guide" style="left:216px;top:175.10px;height:66.48px"></div>
<div class="guide" style="left:169px;top:714.94px;height:100.72px"></div>
<div style="position:absolute;left:125px;top:853.3px;width:2px;height:28px;background:#000"></div>
<svg style="position:absolute;left:125px;top:371.50px" width="244" height="5" viewBox="0 0 244 5"><path d="M0 3.600 L2 1.2 L4 3.6 L6 1.2 L8 3.6 L10 1.2 L12 3.6 L14 1.2 L16 3.6 L18 1.2 L20 3.6 L22 1.2 L24 3.6 L26 1.2 L28 3.6 L30 1.2 L32 3.6 L34 1.2 L36 3.6 L38 1.2 L40 3.6 L42 1.2 L44 3.6 L46 1.2 L48 3.6 L50 1.2 L52 3.6 L54 1.2 L56 3.6 L58 1.2 L60 3.6 L62 1.2 L64 3.6 L66 1.2 L68 3.6 L70 1.2 L72 3.6 L74 1.2 L76 3.6 L78 1.2 L80 3.6 L82 1.2 L84 3.6 L86 1.2 L88 3.6 L90 1.2 L92 3.6 L94 1.2 L96 3.6 L98 1.2 L100 3.6 L102 1.2 L104 3.6 L106 1.2 L108 3.6 L110 1.2 L112 3.6 L114 1.2 L116 3.6 L118 1.2 L120 3.6 L122 1.2 L124 3.6 L126 1.2 L128 3.6 L130 1.2 L132 3.6 L134 1.2 L136 3.6 L138 1.2 L140 3.6 L142 1.2 L144 3.6 L146 1.2 L148 3.6 L150 1.2 L152 3.6 L154 1.2 L156 3.6 L158 1.2 L160 3.6 L162 1.2 L164 3.6 L166 1.2 L168 3.6 L170 1.2 L172 3.6 L174 1.2 L176 3.6 L178 1.2 L180 3.6 L182 1.2 L184 3.6 L186 1.2 L188 3.6 L190 1.2 L192 3.6 L194 1.2 L196 3.6 L198 1.2 L200 3.6 L202 1.2 L204 3.6 L206 1.2 L208 3.6 L210 1.2 L212 3.6 L214 1.2 L216 3.6 L218 1.2 L220 3.6 L222 1.2 L224 3.6 L226 1.2 L228 3.6 L230 1.2 L232 3.6 L234 1.2 L236 3.6 L238 1.2 L240 3.6 L242 1.2" fill="none" stroke="#c2c2c2" stroke-width="0.900"/></svg>
<svg style="position:absolute;left:53px;top:350.00px" viewBox="0 0 22 22" width="22" height="22"><g fill="none" stroke="#6c707e" stroke-width="1.200"><circle cx="10.900" cy="9.700" r="8.000"/><ellipse cx="10.900" cy="9.700" rx="3.900" ry="8.000"/><path d="M3.200 7.200H18.600M3.200 12.400H18.600"/></g><circle cx="14.400" cy="12.600" r="5.300" fill="#fff"/><path d="M17 15.400L21 19.600" stroke="#fff" stroke-width="3.600" stroke-linecap="round"/><circle cx="14.400" cy="12.600" r="3.350" fill="#fff" stroke="#6c707e" stroke-width="1.300"/><path d="M16.900 15.200L19.800 18.300" stroke="#6c707e" stroke-width="1.400" stroke-linecap="round"/></svg>
<div style="position:absolute;left:0;top:48px;width:1025px;height:34px;background:#fff"></div>
<div style="position:absolute;left:0;top:82px;width:1025px;height:7px;background:linear-gradient(to bottom,rgba(226,227,232,.95) 0%,rgba(236,237,240,.6) 45%,rgba(255,255,255,0) 100%)"></div>
<div class="ln" style="left:-14px;top:51px;height:33.74px;line-height:33.74px">17</div>
<div class="code" style="left:125.30000000000001px;top:51px;height:33.74px;line-height:33.74px"><span class="k">async</span> <span class="k">def</span> <span class="f">check<span class="us">_</span>favorite<span class="us">_</span>status</span>(</div>
</div>
</body></html>
